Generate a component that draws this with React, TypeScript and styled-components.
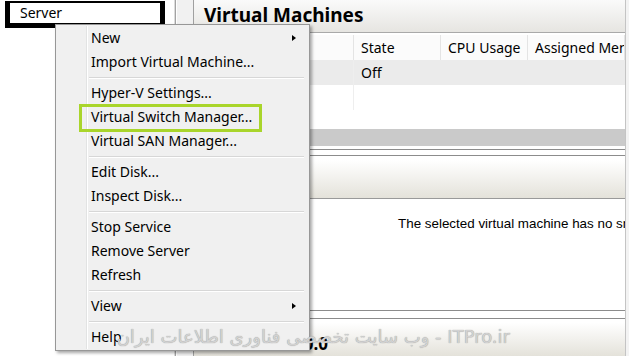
import * as React from 'react'
import styled, { createGlobalStyle } from 'styled-components'

const UI_FONT = `'Noto Sans', 'Open Sans', sans-serif`

const GlobalStyle = createGlobalStyle`
  html, body {
    margin: 0;
    padding: 0;
    background: #ffffff;
  }
  body {
    font-family: ${UI_FONT};
    color: #000;
  }
`

const Screen = styled.div`
  position: relative;
  display: flex;
  width: 629px;
  height: 356px;
  overflow: hidden;
  background: #f3f3f3;
`

const LeftPane = styled.div`
  width: 176px;
  flex-shrink: 0;
  border-right: 1px solid #a3a3a3;
  padding: 1px 0 0 5px;
  box-sizing: border-box;
  background: #fff;
  box-shadow: inset -9px 0 0 -8px #dcdcdc;
`

const TreeNode = styled.div`
  width: 160px;
  height: 27px;
  box-sizing: border-box;
  border: 5px solid #000;
  border-top-width: 2px;
  padding-left: 10px;
  font-size: 14px;
  line-height: 20px;
`

const Splitter = styled.div`
  width: 16px;
  flex-shrink: 0;
  background: #f1f1f1;
  border-left: 1px solid #fff;
  border-right: 1px solid #a0a0a0;
`

const RightPane = styled.div`
  flex: 1;
  display: flex;
  flex-direction: column;
  min-width: 0;
  border-right: 1px solid #c4c4c4;
  margin-right: 3px;
  background: #fff;
`

const PaneHeader = styled.div`
  height: 33px;
  flex-shrink: 0;
  box-sizing: border-box;
  padding-left: 10px;
  font-weight: 700;
  font-size: 19px;
  line-height: 30px;
  background: linear-gradient(#fafafa, #e6e5e1);
  border-bottom: 1px solid #a9a9a9;
  white-space: nowrap;
  overflow: hidden;
`

const Table = styled.div`
  display: grid;
  grid-template-columns: 160px 87px 87px 1fr;
  grid-auto-rows: 25px;
  padding-top: 2px;
  box-sizing: border-box;
  font-size: 14px;
  height: 96px;
  flex-shrink: 0;
  overflow: hidden;
`

const HeadCell = styled.div`
  border-right: 1px solid #e4e4e4;
  padding-left: 7px;
  line-height: 25px;
  white-space: nowrap;
  overflow: hidden;
  background: #fbfbfb;
`

const RowCell = styled.div<{ $selected?: boolean; $first?: boolean }>`
  padding-left: 7px;
  line-height: 25px;
  background: ${p => (p.$selected ? '#ebebeb' : '#ffffff')};
  border-right: ${p => (p.$first ? '1px solid #eeeeee' : 'none')};
`

const ScrollBar = styled.div`
  height: 17px;
  flex-shrink: 0;
  background: #cacaca;
  border-bottom: 3px solid #ffffff;
`

const DoubleRule = styled.div`
  height: 5px;
  flex-shrink: 0;
  border-top: 1px solid #8c8c8c;
  border-bottom: 1px solid #8c8c8c;
  background: #fff;
`

const SubHeader = styled.div<{ $tall: number }>`
  height: ${p => p.$tall}px;
  flex-shrink: 0;
  box-sizing: border-box;
  padding-left: 10px;
  font-weight: 700;
  font-size: 17px;
  line-height: 40px;
  background: linear-gradient(#ffffff 10%, #e4e2da);
  border-bottom: 1px solid #9a9a9a;
`

const Body = styled.div`
  height: 112px;
  flex-shrink: 0;
  background: #fff;
  padding: 17px 0 0 204px;
  box-sizing: border-box;
  font-family: 'Liberation Sans', Arial, sans-serif;
  font-size: 13.4px;
  white-space: nowrap;
  overflow: hidden;
  border-bottom: 1px solid #8c8c8c;
`

const Gap = styled.div`
  height: 7px;
  flex-shrink: 0;
  background: #fff;
  border-bottom: 1px solid #8c8c8c;
`

const Footer = styled.div`
  flex: 1;
  display: flex;
  background: linear-gradient(#ffffff 10%, #e4e2da);
  padding: 13px 0 0 10px;
`

const FooterTitle = styled.div`
  width: 124px;
  text-align: right;
  font-weight: 700;
  font-size: 17px;
  white-space: nowrap;
  overflow: hidden;
`

const Menu = styled.div`
  position: absolute;
  left: 55px;
  top: 24px;
  width: 255px;
  box-sizing: border-box;
  padding: 1px;
  background: #f0f0f0;
  border: 1px solid #979797;
  box-shadow: 2px 2px 3px rgba(0, 0, 0, 0.35);
  font-size: 14px;
  z-index: 5;
  &::before {
    content: '';
    position: absolute;
    top: 1px;
    bottom: 1px;
    left: 30px;
    width: 1px;
    background: #e2e3e3;
    box-shadow: 1px 0 0 #ffffff;
  }
`

const Item = styled.div<{ $marked?: boolean }>`
  position: relative;
  height: 24px;
  line-height: 24px;
  padding-left: 34px;
  white-space: nowrap;
  &::after {
    content: '';
    display: ${p => (p.$marked ? 'block' : 'none')};
    position: absolute;
    left: 22px;
    top: -1px;
    width: 183px;
    height: 28px;
    box-sizing: border-box;
    border: 3px solid #a9d52b;
  }
`

const Arrow = styled.span`
  position: absolute;
  right: 12px;
  top: 9px;
  width: 0;
  height: 0;
  border-top: 3.5px solid transparent;
  border-bottom: 3.5px solid transparent;
  border-left: 4px solid #000;
`

const Separator = styled.div`
  height: 7px;
  box-sizing: border-box;
  padding-top: 3px;
  margin: 0 4px 0 32px;
  &::before {
    content: '';
    display: block;
    height: 1px;
    background: #d7d7d7;
    border-bottom: 1px solid #ffffff;
  }
`

const Watermark = styled.div`
  position: absolute;
  right: 119px;
  top: 326px;
  direction: rtl;
  font-family: 'DejaVu Sans', 'Liberation Sans', sans-serif;
  font-size: 18px;
  color: #d2d2d2;
  text-shadow: 0 0 1px #8a8a8a;
  white-space: nowrap;
  z-index: 10;
`

type Entry = { label?: string; sub?: boolean; marked?: boolean; sep?: boolean }

const MENU: Entry[] = [
  { label: 'New', sub: true },
  { label: 'Import Virtual Machine...' },
  { sep: true },
  { label: 'Hyper-V Settings...' },
  { label: 'Virtual Switch Manager...', marked: true },
  { label: 'Virtual SAN Manager...' },
  { sep: true },
  { label: 'Edit Disk...' },
  { label: 'Inspect Disk...' },
  { sep: true },
  { label: 'Stop Service' },
  { label: 'Remove Server' },
  { label: 'Refresh' },
  { sep: true },
  { label: 'View', sub: true },
  { sep: true },
  { label: 'Help' },
]

const COLUMNS = ['Name', 'State', 'CPU Usage', 'Assigned Memory']

export default function App() {
  return (
    <Screen>
      <GlobalStyle />
      <LeftPane>
        <TreeNode>Server</TreeNode>
      </LeftPane>
      <Splitter />
      <RightPane>
        <PaneHeader>Virtual Machines</PaneHeader>
        <Table>
          {COLUMNS.map(c => (
            <HeadCell key={c}>{c}</HeadCell>
          ))}
          <RowCell $selected $first>VM01</RowCell>
          <RowCell $selected>Off</RowCell>
          <RowCell $selected />
          <RowCell $selected />
          <RowCell $first />
          <RowCell />
          <RowCell />
          <RowCell />
        </Table>
        <ScrollBar />
        <DoubleRule />
        <SubHeader $tall={43}>Checkpoints</SubHeader>
        <Body>The selected virtual machine has no snapshots.</Body>
        <Gap />
        <Footer>
          <FooterTitle>Windows 10.0</FooterTitle>
        </Footer>
      </RightPane>
      <Menu>
        {MENU.map((m, i) =>
          m.sep ? (
            <Separator key={i} />
          ) : (
            <Item key={i} $marked={m.marked}>
              {m.label}
              {m.sub && <Arrow />}
            </Item>
          )
        )}
      </Menu>
      <Watermark>ITPro.ir - وب سایت تخصصی فناوری اطلاعات ایران</Watermark>
    </Screen>
  )
}
